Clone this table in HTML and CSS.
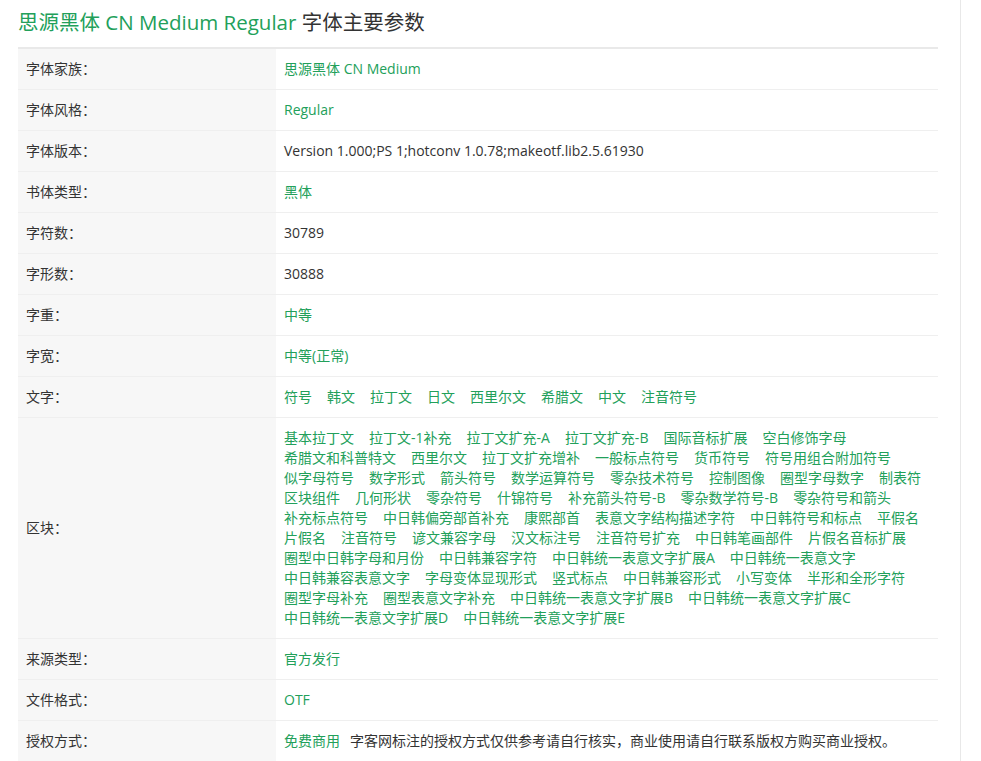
FILE: index.html
```html
<!DOCTYPE html>
<html lang="zh-CN">
<head>
<meta charset="utf-8">
<title>思源黑体 CN Medium Regular 字体主要参数</title>
<link rel="stylesheet" href="styles.css">
</head>
<body>
<div class="panel">
  <h2 class="title"><span class="hl">思源黑体 CN Medium Regular</span> 字体主要参数</h2>
  <table class="params">
    <tr><th>字体家族：</th><td class="g">思源黑体 CN Medium</td></tr>
    <tr><th>字体风格：</th><td class="g">Regular</td></tr>
    <tr><th>字体版本：</th><td>Version 1.000;PS 1;hotconv 1.0.78;makeotf.lib2.5.61930</td></tr>
    <tr><th>书体类型：</th><td class="g">黑体</td></tr>
    <tr><th>字符数：</th><td>30789</td></tr>
    <tr><th>字形数：</th><td>30888</td></tr>
    <tr><th>字重：</th><td class="g">中等</td></tr>
    <tr><th>字宽：</th><td class="g">中等(正常)</td></tr>
    <tr><th>文字：</th><td class="g"><div class="tags"><span>符号</span><span>韩文</span><span>拉丁文</span><span>日文</span><span>西里尔文</span><span>希腊文</span><span>中文</span><span>注音符号</span></div></td></tr>
    <tr><th>区块：</th><td class="g"><div class="tags"><span>基本拉丁文</span><span>拉丁文-1补充</span><span>拉丁文扩充-A</span><span>拉丁文扩充-B</span><span>国际音标扩展</span><span>空白修饰字母</span><span>希腊文和科普特文</span><span>西里尔文</span><span>拉丁文扩充增补</span><span>一般标点符号</span><span>货币符号</span><span>符号用组合附加符号</span><span>似字母符号</span><span>数字形式</span><span>箭头符号</span><span>数学运算符号</span><span>零杂技术符号</span><span>控制图像</span><span>圈型字母数字</span><span>制表符</span><span>区块组件</span><span>几何形状</span><span>零杂符号</span><span>什锦符号</span><span>补充箭头符号-B</span><span>零杂数学符号-B</span><span>零杂符号和箭头</span><span>补充标点符号</span><span>中日韩偏旁部首补充</span><span>康熙部首</span><span>表意文字结构描述字符</span><span>中日韩符号和标点</span><span>平假名</span><span>片假名</span><span>注音符号</span><span>谚文兼容字母</span><span>汉文标注号</span><span>注音符号扩充</span><span>中日韩笔画部件</span><span>片假名音标扩展</span><span>圈型中日韩字母和月份</span><span>中日韩兼容字符</span><span>中日韩统一表意文字扩展A</span><span>中日韩统一表意文字</span><span>中日韩兼容表意文字</span><span>字母变体显现形式</span><span>竖式标点</span><span>中日韩兼容形式</span><span>小写变体</span><span>半形和全形字符</span><span>圈型字母补充</span><span>圈型表意文字补充</span><span>中日韩统一表意文字扩展B</span><span>中日韩统一表意文字扩展C</span><span>中日韩统一表意文字扩展D</span><span>中日韩统一表意文字扩展E</span></div></td></tr>
    <tr><th>来源类型：</th><td class="g">官方发行</td></tr>
    <tr><th>文件格式：</th><td class="g">OTF</td></tr>
    <tr><th>授权方式：</th><td><span class="g lic">免费商用</span>字客网标注的授权方式仅供参考请自行核实，商业使用请自行联系版权方购买商业授权。</td></tr>
  </table>
</div>
</body>
</html>
```

FILE: styles.css
```css
html, body {
  margin: 0;
  padding: 0;
  background: #fff;
}
body {
  font-family: "Open Sans", "Noto Sans CJK SC", sans-serif;
  font-size: 14px;
  color: #333;
}
.panel {
  width: 920px;
  padding: 0 22px 0 18px;
  border-right: 1px solid #e8e8e8;
  min-height: 761px;
  box-sizing: content-box;
}
.title {
  margin: 0;
  padding-top: 8px;
  height: 39px;
  font-size: 20.5px;
  line-height: 29px;
  font-weight: normal;
  color: #333;
}
.hl { color: #22a05a; }
.params {
  width: 920px;
  border-collapse: collapse;
  border-top: 2px solid #e9e9e9;
}
.params th, .params td {
  padding: 10px 8px;
  line-height: 20px;
  border-bottom: 1px solid #efefef;
  text-align: left;
  vertical-align: middle;
  font-weight: normal;
}
.params th {
  width: 242px;
  background: #f7f7f7;
  color: #333;
}
.g { color: #22a05a; }
.tags {
  display: flex;
  flex-wrap: wrap;
  column-gap: 15px;
}
.tags span {
  white-space: nowrap;
}
.lic { margin-right: 10px; }
```
